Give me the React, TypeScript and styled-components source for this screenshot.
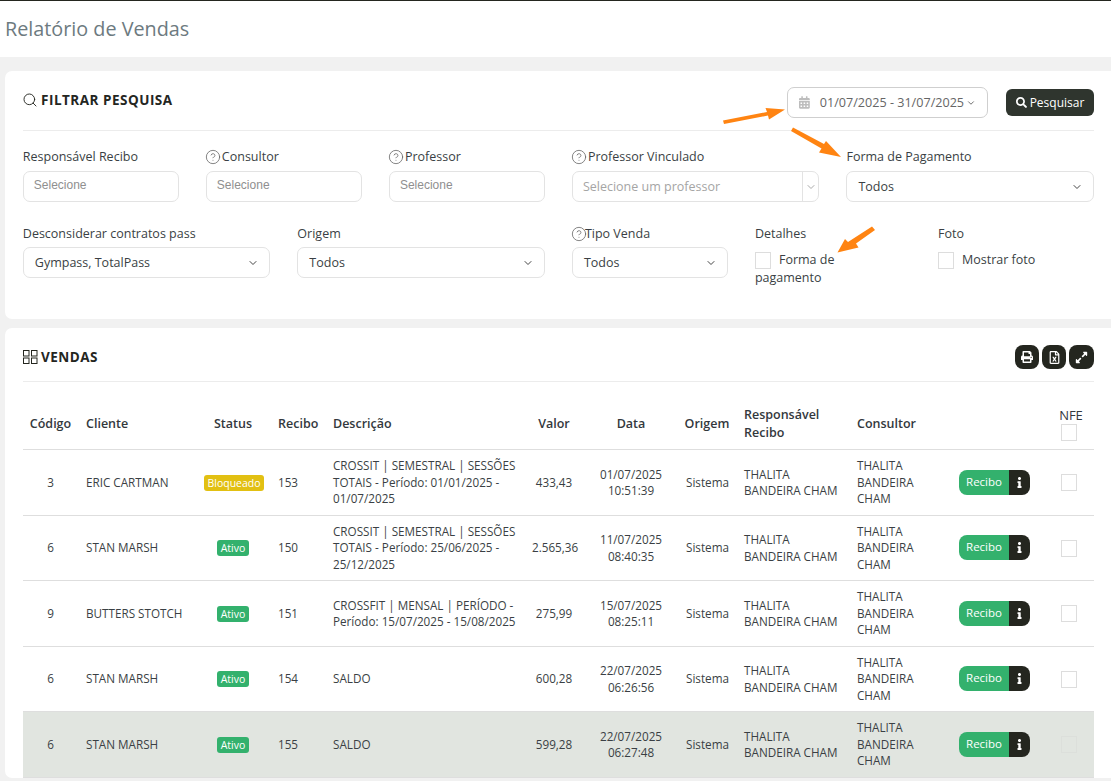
import React from "react";
import styled, { createGlobalStyle } from "styled-components";
import { Search, CircleHelp, ChevronDown } from "lucide-react";
import { FaSearch, FaPrint, FaRegFileExcel, FaExpandAlt, FaInfo, FaCalendarAlt } from "react-icons/fa";

const Global = createGlobalStyle`
  html, body { margin: 0; padding: 0; height: 781px; overflow: hidden; background: #f1f1f1; }
  body { font-family: "Open Sans", "Liberation Sans", sans-serif; color: #33383d; font-size: 12px; }
  * { box-sizing: border-box; }
`;

const Page = styled.div`
  position: relative;
  width: 1111px;
  height: 781px;
  overflow: hidden;
`;

const TopHeader = styled.header`
  height: 57px;
  background: #fff;
  border-top: 1px solid #24261f;
  padding: 14px 5px 0;
`;

const PageTitle = styled.h1`
  margin: 0;
  font-size: 19.8px;
  line-height: 28px;
  font-weight: 400;
  color: #6d7a80;
`;

const Main = styled.main`
  display: flex;
  flex-direction: column;
  gap: 9px;
  padding: 14px 0 0 5px;
`;

const Card = styled.section<{ $h?: number }>`
  background: #fff;
  border-radius: 7px 0 0 7px;
  padding: 0 17px 0 18px;
  ${(p) => (p.$h ? `height: ${p.$h}px;` : "")}
`;

const CardHeader = styled.div<{ $h: number; $top: number }>`
  display: flex;
  justify-content: space-between;
  align-items: center;
  height: ${(p) => p.$h}px;
  padding-top: ${(p) => p.$top}px;
  border-bottom: 1px solid #ececec;
`;

const CardTitle = styled.h2`
  display: flex;
  align-items: center;
  gap: 3px;
  margin: 0;
  font-size: 13.5px;
  font-weight: 700;
  letter-spacing: 0.5px;
  color: #24261f;
`;

const FilterTitle = styled(CardTitle)`
  margin: -5px 0 0 -1px;
`;

const HeaderActions = styled.div`
  display: flex;
  align-items: center;
  gap: 18px;
`;

const DateButton = styled.div`
  display: flex;
  align-items: center;
  width: 201px;
  height: 31px;
  padding: 0 11px;
  border: 1px solid #cfcfcf;
  border-radius: 7px;
  color: #666;
  font-size: 12.6px;
  white-space: nowrap;
  svg:first-child { margin-right: 10px; color: #bdbdbd; }
  svg:last-child { margin-left: 2px; color: #555; }
`;

const SearchButton = styled.div`
  display: flex;
  align-items: center;
  justify-content: center;
  gap: 3px;
  width: 88px;
  height: 27px;
  border-radius: 6px;
  background: #2f352e;
  color: #fff;
  font-size: 12px;
  font-weight: 500;
`;

const FilterGrid = styled.div`
  display: grid;
  grid-template-columns: repeat(12, 1fr);
  column-gap: 27px;
  grid-auto-rows: 76px;
  padding-top: 16px;
  margin-left: -0.2px;
`;

const Field = styled.div<{ $span: number }>`
  grid-column: span ${(p) => p.$span};
  min-width: 0;
`;

const Label = styled.div<{ $gap?: number }>`
  display: flex;
  align-items: center;
  gap: 2px;
  height: 18px;
  margin-top: ${(p) => 6 - (p.$gap ?? 5)}px;
  margin-bottom: ${(p) => p.$gap ?? 5}px;
  font-size: 12.5px;
  line-height: 18px;
  color: #3a3f44;
  white-space: nowrap;
  svg { color: #666; margin: 0 -1px; }
`;

const TightLabel = styled(Label)`
  gap: 0;
  svg { margin-right: -2px; }
`;

const Placeholder = styled.div`
  display: flex;
  align-items: center;
  height: 31px;
  padding: 0 10px 4px;
  border: 1px solid #e3e3e3;
  border-radius: 7px;
  font-family: "Liberation Sans", Arial, sans-serif;
  font-size: 12px;
  color: #8f8f8f;
`;

const Select = styled.div`
  display: flex;
  align-items: center;
  justify-content: space-between;
  height: 31px;
  padding: 0 10px 0 11px;
  border: 1px solid #e3e3e3;
  border-radius: 7px;
  font-size: 12.5px;
  color: #3a3f44;
  svg { color: #444; }
`;

const ComboBox = styled.div`
  display: flex;
  align-items: stretch;
  height: 31px;
  border: 1px solid #e3e3e3;
  border-radius: 7px;
  font-size: 12.5px;
  color: #a5a5a5;
`;

const ComboText = styled.div`
  flex: 1;
  display: flex;
  align-items: center;
  padding-left: 10px;
`;

const ComboArrow = styled.div`
  width: 16px;
  display: flex;
  align-items: center;
  justify-content: center;
  border-left: 1px solid #e3e3e3;
  color: #aaa;
`;

const CheckLabel = styled.div`
  max-width: 110px;
  margin-top: 8px;
  font-size: 12.5px;
  line-height: 18px;
  color: #3a3f44;
`;

const Box = styled.span<{ $muted?: boolean }>`
  display: inline-block;
  width: 16px;
  height: 17px;
  border: 1px solid ${(p) => (p.$muted ? "#dcdfdb" : "#dddddd")};
  background: ${(p) => (p.$muted ? "transparent" : "#fff")};
  vertical-align: middle;
`;

const CheckText = styled.span`
  margin-left: 8px;
`;

const IconButtons = styled.div`
  display: flex;
  gap: 3px;
`;

const IconButton = styled.div<{ $w?: number }>`
  width: ${(p) => p.$w ?? 24}px;
  height: 24px;
  display: flex;
  align-items: center;
  justify-content: center;
  border-radius: 8px;
  background: #24261f;
  color: #fff;
`;

const Table = styled.table`
  width: 1071px;
  margin-top: 15px;
  table-layout: fixed;
  border-collapse: collapse;
  font-size: 11.7px;
  line-height: 16.5px;
`;

const Th = styled.th<{ $align?: string }>`
  height: 52px;
  padding: 2px ${(p) => (p.$align === "center" ? 0 : 8)}px 0;
  font-size: 12.5px;
  font-weight: 600;
  line-height: 18px;
  color: #33383d;
  text-align: ${(p) => p.$align ?? "left"};
  border-bottom: 1px solid #dedede;
  vertical-align: middle;
`;

const NfeHead = styled.div`
  font-weight: 400;
  font-size: 13px;
  line-height: 16px;
  padding-left: 5px;
`;

const Tr = styled.tr<{ $selected?: boolean; $h: number }>`
  height: ${(p) => p.$h}px;
  background: ${(p) => (p.$selected ? "#e1e5e0" : "#fff")};
`;

const Td = styled.td<{ $align?: string }>`
  padding: 0 8px;
  text-align: ${(p) => p.$align ?? "left"};
  border-bottom: 1px solid #dedede;
  vertical-align: middle;
  color: #3a3f44;
`;

const DescLine = styled.div`
  white-space: nowrap;
`;

const Badge = styled.span<{ $tone: "green" | "yellow" }>`
  display: inline-block;
  padding: 0 3.5px;
  height: 16px;
  line-height: 16px;
  border-radius: 3px;
  font-size: 10.5px;
  color: #fff;
  background: ${(p) => (p.$tone === "green" ? "#33b16d" : "#e2c012")};
`;

const ReciboGroup = styled.div`
  display: flex;
  width: 71px;
  height: 25px;
  border-radius: 8px;
  overflow: hidden;
`;

const ReciboBtn = styled.div`
  width: 50px;
  display: flex;
  align-items: center;
  justify-content: center;
  background: #33b16d;
  color: #fff;
  font-size: 11.5px;
  font-weight: 500;
`;

const InfoBtn = styled.div`
  flex: 1;
  display: flex;
  align-items: center;
  justify-content: center;
  background: #24261f;
  color: #fff;
`;

const ActionTd = styled(Td)`
  padding: 0 0 0 8px;
`;

const Overlay = styled.svg`
  position: absolute;
  left: 0;
  top: 0;
  pointer-events: none;
`;

const GridIcon = () => (
  <svg width="15" height="14" viewBox="0 0 15 14" fill="none" stroke="#24261f" strokeWidth="1">
    <rect x="0.5" y="0.5" width="5.5" height="5.5" />
    <rect x="8.5" y="0.5" width="5.5" height="5.5" />
    <rect x="0.5" y="8" width="5.5" height="5.5" />
    <rect x="8.5" y="8" width="5.5" height="5.5" />
  </svg>
);

const Help = () => <CircleHelp size={16} strokeWidth={1.2} />;
const Chevron = () => <ChevronDown size={12} strokeWidth={2} />;

const rows = [
  { code: "3", client: "ERIC CARTMAN", status: "Bloqueado", rec: "153", desc: ["CROSSIT | SEMESTRAL | SESSÕES", "TOTAIS - Período: 01/01/2025 -", "01/07/2025"], val: "433,43", date: "01/07/2025", time: "10:51:39", h: 66 },
  { code: "6", client: "STAN MARSH", status: "Ativo", rec: "150", desc: ["CROSSIT | SEMESTRAL | SESSÕES", "TOTAIS - Período: 25/06/2025 -", "25/12/2025"], val: "2.565,36", date: "11/07/2025", time: "08:40:35", h: 65 },
  { code: "9", client: "BUTTERS STOTCH", status: "Ativo", rec: "151", desc: ["CROSSFIT | MENSAL | PERÍODO -", "Período: 15/07/2025 - 15/08/2025"], val: "275,99", date: "15/07/2025", time: "08:25:11", h: 66 },
  { code: "6", client: "STAN MARSH", status: "Ativo", rec: "154", desc: ["SALDO"], val: "600,28", date: "22/07/2025", time: "06:26:56", h: 65 },
  { code: "6", client: "STAN MARSH", status: "Ativo", rec: "155", desc: ["SALDO"], val: "599,28", date: "22/07/2025", time: "06:27:48", h: 66, selected: true },
];

const colWidths = [55, 118, 74, 55, 199, 60, 94, 58, 113, 102, 92, 51];

export default function App() {
  return (
    <Page>
      <Global />
      <TopHeader>
        <PageTitle>Relatório de Vendas</PageTitle>
      </TopHeader>
      <Main>
        <Card $h={248}>
          <CardHeader $h={60} $top={4}>
            <FilterTitle>
              <Search size={16} strokeWidth={1.4} />
              FILTRAR PESQUISA
            </FilterTitle>
            <HeaderActions>
              <DateButton>
                <FaCalendarAlt size={13} />
                01/07/2025 - 31/07/2025
                <ChevronDown size={12} strokeWidth={2} />
              </DateButton>
              <SearchButton>
                <FaSearch size={11} />
                Pesquisar
              </SearchButton>
            </HeaderActions>
          </CardHeader>
          <FilterGrid>
            <Field $span={2}>
              <Label>Responsável Recibo</Label>
              <Placeholder>Selecione</Placeholder>
            </Field>
            <Field $span={2}>
              <Label><Help />Consultor</Label>
              <Placeholder>Selecione</Placeholder>
            </Field>
            <Field $span={2}>
              <Label><Help />Professor</Label>
              <Placeholder>Selecione</Placeholder>
            </Field>
            <Field $span={3}>
              <Label><Help />Professor Vinculado</Label>
              <ComboBox>
                <ComboText>Selecione um professor</ComboText>
                <ComboArrow><ChevronDown size={12} strokeWidth={2} /></ComboArrow>
              </ComboBox>
            </Field>
            <Field $span={3}>
              <Label>Forma de Pagamento</Label>
              <Select>Todos<Chevron /></Select>
            </Field>
            <Field $span={3}>
              <Label $gap={4}>Desconsiderar contratos pass</Label>
              <Select>Gympass, TotalPass<Chevron /></Select>
            </Field>
            <Field $span={3}>
              <Label $gap={4}>Origem</Label>
              <Select>Todos<Chevron /></Select>
            </Field>
            <Field $span={2}>
              <TightLabel $gap={4}><Help />Tipo Venda</TightLabel>
              <Select>Todos<Chevron /></Select>
            </Field>
            <Field $span={2}>
              <Label $gap={4}>Detalhes</Label>
              <CheckLabel><Box /><CheckText>Forma de pagamento</CheckText></CheckLabel>
            </Field>
            <Field $span={2}>
              <Label $gap={4}>Foto</Label>
              <CheckLabel><Box /><CheckText>Mostrar foto</CheckText></CheckLabel>
            </Field>
          </FilterGrid>
        </Card>
        <Card>
          <CardHeader $h={54} $top={5}>
            <CardTitle>
              <GridIcon />
              VENDAS
            </CardTitle>
            <IconButtons>
              <IconButton><FaPrint size={12} /></IconButton>
              <IconButton><FaRegFileExcel size={13} /></IconButton>
              <IconButton $w={25}><FaExpandAlt size={13} /></IconButton>
            </IconButtons>
          </CardHeader>
          <Table>
            <colgroup>
              {colWidths.map((w, i) => <col key={i} style={{ width: w }} />)}
            </colgroup>
            <thead>
              <tr>
                <Th $align="center">Código</Th>
                <Th>Cliente</Th>
                <Th $align="center">Status</Th>
                <Th>Recibo</Th>
                <Th>Descrição</Th>
                <Th $align="center">Valor</Th>
                <Th $align="center">Data</Th>
                <Th $align="center">Origem</Th>
                <Th>Responsável Recibo</Th>
                <Th>Consultor</Th>
                <Th />
                <Th $align="center">
                  <NfeHead>NFE</NfeHead>
                  <Box />
                </Th>
              </tr>
            </thead>
            <tbody>
              {rows.map((r) => (
                <Tr key={r.rec} $selected={r.selected} $h={r.h}>
                  <Td $align="center">{r.code}</Td>
                  <Td>{r.client}</Td>
                  <Td $align="center">
                    <Badge $tone={r.status === "Ativo" ? "green" : "yellow"}>{r.status}</Badge>
                  </Td>
                  <Td>{r.rec}</Td>
                  <Td>{r.desc.map((d) => <DescLine key={d}>{d}</DescLine>)}</Td>
                  <Td $align="center">{r.val}</Td>
                  <Td $align="center"><div>{r.date}</div><div>{r.time}</div></Td>
                  <Td $align="center">Sistema</Td>
                  <Td>THALITA BANDEIRA CHAM</Td>
                  <Td>THALITA BANDEIRA CHAM</Td>
                  <ActionTd>
                    <ReciboGroup>
                      <ReciboBtn>Recibo</ReciboBtn>
                      <InfoBtn><FaInfo size={11} /></InfoBtn>
                    </ReciboGroup>
                  </ActionTd>
                  <Td $align="center"><Box $muted={r.selected} /></Td>
                </Tr>
              ))}
            </tbody>
          </Table>
        </Card>
      </Main>
      <Overlay width="1111" height="781" viewBox="0 0 1111 781">
        <g fill="#ff8412" stroke="none">
          <polygon points="723,120.5 767,112 765.5,108 785,109.5 769,119.5 768,115.5 724,124" />
          <polygon points="793,127.5 824,144 826,141 841,157 819,152.5 821.5,148.5 791,131" />
          <polygon points="872,226.5 875,230 856,243.5 858.5,247.5 837.5,252.5 845,239 848,242" />
        </g>
      </Overlay>
    </Page>
  );
}
